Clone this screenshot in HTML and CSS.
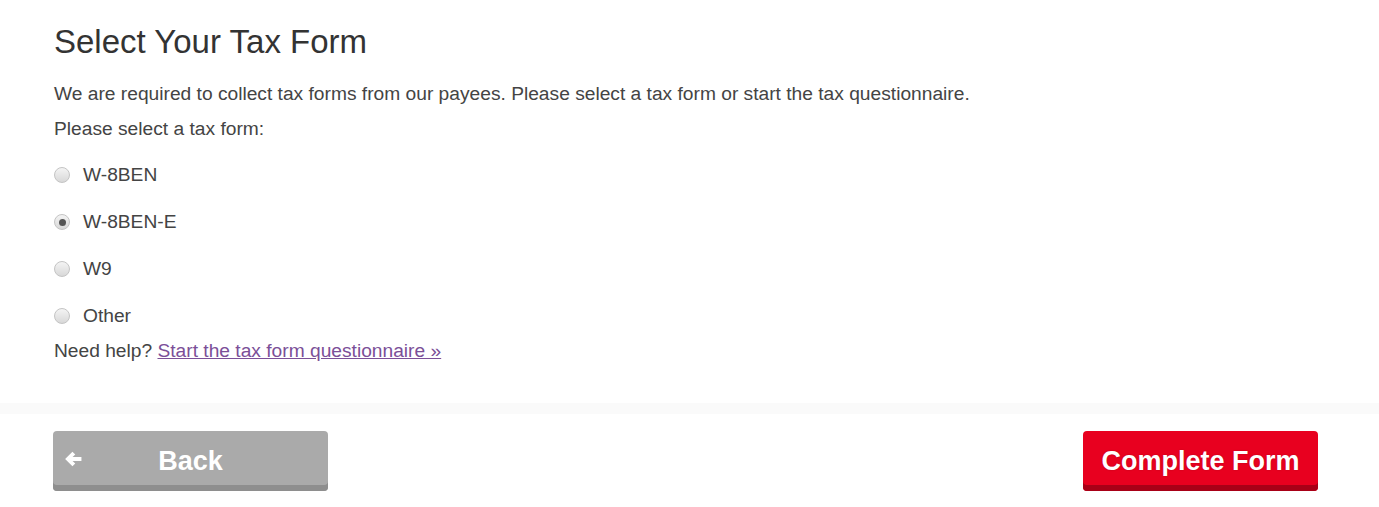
FILE: index.html
```html
<!DOCTYPE html>
<html lang="en">
<head>
    <meta charset="UTF-8">
    <meta name="viewport" content="width=device-width, initial-scale=1.0">
    <title>Select Your Tax Form</title>
    <link rel="stylesheet" href="styles.css">
</head>
<body>
    <div class="content">
        <h1>Select Your Tax Form</h1>
        <p class="intro">We are required to collect tax forms from our payees. Please select a tax form or start the tax questionnaire.</p>
        <p class="prompt">Please select a tax form:</p>

        <form class="tax-forms">
            <label class="option"><input type="radio" name="taxForm" value="w8ben"> W-8BEN</label>
            <label class="option"><input type="radio" name="taxForm" value="w8bene" checked> W-8BEN-E</label>
            <label class="option"><input type="radio" name="taxForm" value="w9"> W9</label>
            <label class="option"><input type="radio" name="taxForm" value="other"> Other</label>
        </form>

        <p class="help">Need help? <a href="#">Start the tax form questionnaire &raquo;</a></p>
    </div>

    <div class="footer">
        <button type="button" class="btn btn-back">
            <svg class="arrow" width="18" height="18" viewBox="0 0 16 16">
                <path d="M7.5 1.5 L1 8 L7.5 14.5 L10 12 L7.6 9.8 H15.5 V6.2 H7.6 L10 4 Z" fill="#fff"/>
            </svg>
            Back
        </button>
        <button type="button" class="btn btn-complete">Complete Form</button>
    </div>
</body>
</html>
```

FILE: styles.css
```css
body {
    margin: 0;
    font-family: "Liberation Sans", Arial, sans-serif;
    color: #444;
    background-color: #fff;
}

.content {
    padding: 0 54px;
    height: 403px;
}

h1 {
    margin: 0;
    padding-top: 24px;
    font-size: 33px;
    line-height: 36px;
    font-weight: normal;
    color: #333;
}

.intro {
    margin: 22px 0 0;
    font-size: 19.2px;
    line-height: 24px;
}

.prompt {
    margin: 11px 0 0;
    font-size: 19.2px;
    line-height: 24px;
}

.tax-forms {
    display: flex;
    flex-direction: column;
    gap: 23px;
    margin-top: 22px;
}

.option {
    display: flex;
    align-items: center;
    gap: 13px;
    font-size: 19.2px;
    line-height: 24px;
}

.option input {
    appearance: none;
    -webkit-appearance: none;
    box-sizing: border-box;
    margin: 0;
    width: 16px;
    height: 16px;
    border-radius: 50%;
    border: 1px solid #c4c4c4;
    background: linear-gradient(#f4f4f4, #d8d8d8);
    position: relative;
}

.option input:checked::after {
    content: "";
    position: absolute;
    left: 3.5px;
    top: 3.5px;
    width: 7px;
    height: 7px;
    border-radius: 50%;
    background-color: #555;
}

.help {
    margin: 11px 0 0;
    font-size: 19.2px;
    line-height: 24px;
}

.help a {
    color: #7b4f98;
}

.footer {
    display: flex;
    justify-content: space-between;
    padding: 17px 61px 0 53px;
    border-top: 11px solid #fafafa;
}

.btn {
    display: flex;
    align-items: center;
    justify-content: center;
    position: relative;
    height: 60px;
    border: none;
    border-radius: 4px;
    font-family: "Liberation Sans", Arial, sans-serif;
    font-size: 27px;
    font-weight: bold;
    color: #fff;
    cursor: pointer;
}

.btn-back {
    width: 275px;
    background-color: #aaa;
    box-shadow: inset 0 -6px 0 #8e8e8e;
    padding-top: 1px;
}

.arrow {
    position: absolute;
    left: 11px;
    top: 19px;
}

.btn-complete {
    width: 235px;
    background-color: #e8001f;
    box-shadow: inset 0 -6px 0 #a80017;
    padding-top: 1px;
    text-shadow: 0 0 2px rgba(0, 0, 0, 0.2);
}
```
